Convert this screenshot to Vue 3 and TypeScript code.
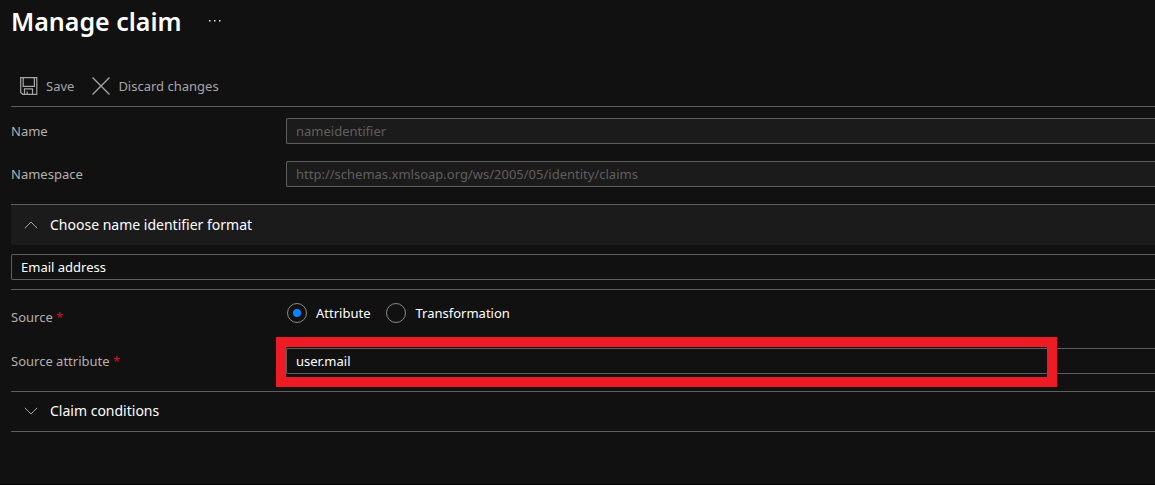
<script setup lang="ts">
import { ref } from 'vue'

const name = ref('nameidentifier')
const namespace = ref('http://schemas.xmlsoap.org/ws/2005/05/identity/claims')
const format = ref('Email address')
const source = ref<'attribute' | 'transformation'>('attribute')
const sourceAttribute = ref('user.mail')
const formatOpen = ref(true)
const conditionsOpen = ref(false)
</script>

<template>
  <main class="page">
    <header class="header">
      <h1 class="title">Manage claim</h1>
      <button class="more" type="button" aria-label="More actions">
        <svg width="14" height="4" viewBox="0 0 14 4" fill="#e4e4e4">
          <rect x="1" y="1" width="1.5" height="1.5" />
          <rect x="6" y="1" width="1.5" height="1.5" />
          <rect x="11" y="1" width="1.5" height="1.5" />
        </svg>
      </button>
    </header>

    <div class="toolbar">
      <button class="command" type="button">
        <svg width="18" height="18" viewBox="0 0 18 18" fill="none" stroke="#a6a6a6" stroke-width="1.2">
          <path d="M.7.7H16.8V17.3H2.7L.7 15.4Z" />
          <path d="M3.2.7V9.4H14.4V.7M4.5 17.3V11.9H12.5V17.3M7.2 17.3V14.4" />
        </svg>
        Save
      </button>
      <button class="command" type="button">
        <svg width="18" height="18" viewBox="0 0 18 18" fill="none" stroke="#a6a6a6" stroke-width="1.3">
          <path d="M.5.5 17.5 17.5M17.5.5.5 17.5" />
        </svg>
        Discard changes
      </button>
    </div>

    <div class="fields">
      <div class="row">
        <label class="label" for="name">Name</label>
        <input id="name" v-model="name" class="box" type="text" disabled />
      </div>
      <div class="row">
        <label class="label" for="namespace">Namespace</label>
        <input id="namespace" v-model="namespace" class="box" type="text" disabled />
      </div>
    </div>

    <section class="section">
      <button class="fold open" type="button" :aria-expanded="formatOpen" @click="formatOpen = !formatOpen">
        <svg width="14" height="8" viewBox="0 0 14 8" fill="none" stroke="#a6a6a6">
          <path :d="formatOpen ? 'M.8 7.2 7 1 13.2 7.2' : 'M.8.8 7 7 13.2.8'" />
        </svg>
        Choose name identifier format
      </button>
      <div v-if="formatOpen" class="format">
        <input v-model="format" class="box" type="text" aria-label="Name identifier format" />
      </div>
    </section>

    <section class="section source">
      <div class="row choices">
        <span id="source-label" class="label">Source <span class="star">*</span></span>
        <div class="radios" role="radiogroup" aria-labelledby="source-label">
          <label class="radio">
            <input v-model="source" type="radio" name="source" value="attribute" />
            Attribute
          </label>
          <label class="radio">
            <input v-model="source" type="radio" name="source" value="transformation" />
            Transformation
          </label>
        </div>
      </div>
      <div class="row">
        <label class="label" for="source-attribute">Source attribute <span class="star">*</span></label>
        <div class="marked">
          <input id="source-attribute" v-model="sourceAttribute" class="box" type="text" />
          <span class="marker" aria-hidden="true"></span>
        </div>
      </div>
    </section>

    <section class="section last">
      <button class="fold" type="button" :aria-expanded="conditionsOpen" @click="conditionsOpen = !conditionsOpen">
        <svg width="14" height="8" viewBox="0 0 14 8" fill="none" stroke="#a6a6a6">
          <path :d="conditionsOpen ? 'M.8 7.2 7 1 13.2 7.2' : 'M.8.8 7 7 13.2.8'" />
        </svg>
        Claim conditions
      </button>
    </section>
  </main>
</template>

<style>
body {
  background: #111111;
}
</style>

<style scoped>
.page {
  box-sizing: border-box;
  min-height: 100vh;
  padding-left: 11px;
  overflow: hidden;
  background: #111111;
  border-bottom: 1px solid #000000;
  color: #ffffff;
  font: 13px/20px "Segoe UI", "Noto Sans", "Open Sans", sans-serif;
}

button,
input {
  margin: 0;
  font: inherit;
  color: inherit;
}

button {
  display: flex;
  align-items: center;
  padding: 0;
  border: 0;
  background: none;
  cursor: pointer;
}

.header {
  display: flex;
  align-items: center;
  gap: 26px;
  height: 42px;
}

.title {
  margin: 0;
  font-size: 25px;
  line-height: 32px;
  font-weight: 600;
}

.more {
  height: 20px;
}

.toolbar {
  display: flex;
  align-items: center;
  gap: 18px;
  height: 40px;
  margin-top: 24px;
  padding-left: 9px;
  border-bottom: 1px solid #605e5c;
}

.command {
  gap: 8px;
  color: #a6a6a6;
}

.fields {
  display: grid;
  gap: 17px;
  padding: 11px 0 17px;
}

.row {
  display: flex;
  align-items: center;
}

.label {
  flex: 0 0 275px;
  color: #b3b0ad;
}

.star {
  color: #d0142c;
}

.box {
  box-sizing: border-box;
  display: block;
  flex: 1;
  width: 100%;
  min-width: 0;
  height: 26px;
  padding: 0 9px;
  border: 1px solid #605e5c;
  border-right: 0;
  border-radius: 2px 0 0 2px;
  background: #111111;
  outline: 0;
}

.box:disabled {
  background: #1b1b1b;
  color: #605e5c;
}

.section {
  border-top: 1px solid #605e5c;
}

.fold {
  gap: 12px;
  width: 100%;
  height: 38px;
  padding-left: 13px;
  font-size: 14px;
}

.fold.open {
  height: 40px;
  background: #1b1b1b;
}

.format {
  padding: 9px 0;
}

.source {
  padding: 13px 0 17px;
}

.choices {
  align-items: flex-start;
  margin-bottom: 25px;
}

.choices .label {
  padding-top: 4px;
  margin-bottom: -4px;
}

.radios {
  display: flex;
  gap: 16px;
  padding-left: 1px;
}

.radio {
  display: flex;
  align-items: center;
  gap: 9px;
}

.radio input {
  appearance: none;
  display: grid;
  place-items: center;
  box-sizing: border-box;
  width: 20px;
  height: 20px;
  border: 1px solid #8a8886;
  border-radius: 50%;
}

.radio input:checked::before {
  content: "";
  width: 8px;
  height: 8px;
  border-radius: 50%;
  background: #0a84ff;
}

.marked {
  position: relative;
  flex: 1;
}

.marker {
  position: absolute;
  inset: -11px 98px -13px -10px;
  border: 10px solid #ed1c24;
  pointer-events: none;
}

.last {
  padding-bottom: 1px;
  border-bottom: 1px solid #605e5c;
}
</style>
